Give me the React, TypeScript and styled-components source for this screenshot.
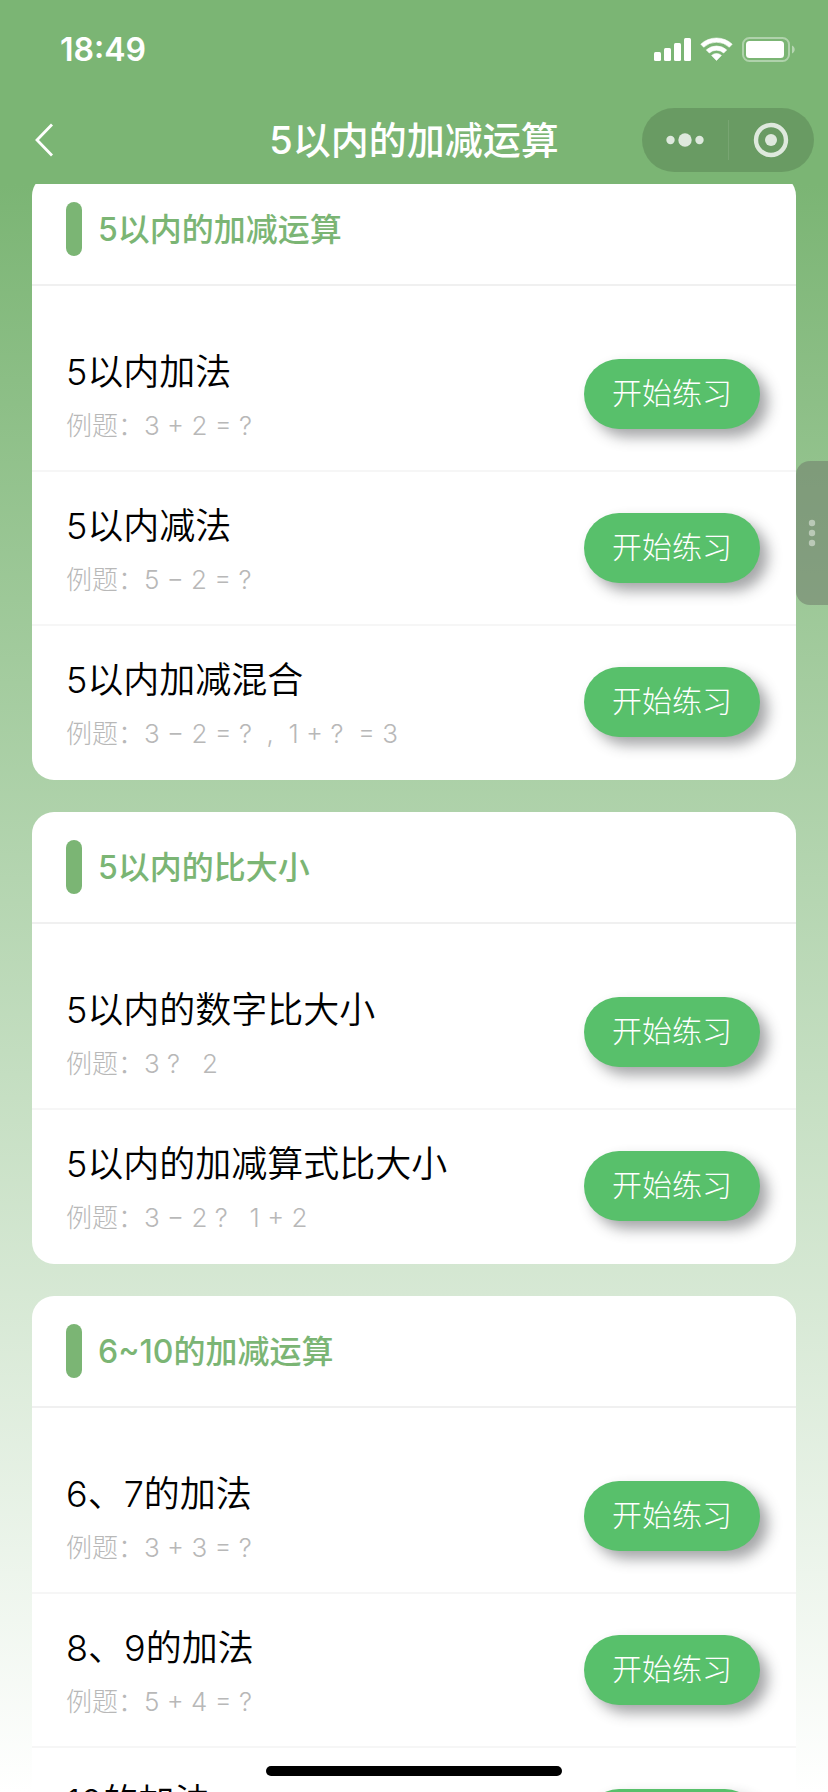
import React from "react";
import styled, { createGlobalStyle } from "styled-components";

const GlobalStyle = createGlobalStyle`
  * { box-sizing: border-box; }
  body {
    margin: 0;
    font-family: Inter, "Noto Sans CJK SC", sans-serif;
    color: #000;
  }
`;

const Screen = styled.div`
  display: flex;
  flex-direction: column;
  height: 100vh;
  overflow: hidden;
  background: #7bb574;
`;

const StatusBar = styled.div`
  display: flex;
  align-items: center;
  justify-content: space-between;
  flex: none;
  height: 96px;
  padding: 4px 32px 0 60px;
  color: #fff;
`;

const Clock = styled.time`
  font-size: 32px;
  line-height: 40px;
  font-weight: 600;
`;

const NavBar = styled.header`
  display: grid;
  grid-template-columns: 1fr auto 1fr;
  align-items: center;
  flex: none;
  height: 88px;
  padding: 0 14px;
  color: #fff;
`;

const BackButton = styled.button`
  display: flex;
  justify-self: start;
  padding: 8px 20px;
  border: 0;
  background: none;
  color: inherit;
`;

const PageTitle = styled.h1`
  margin: 0;
  font-size: 38px;
  line-height: 48px;
  font-weight: 500;
`;

const Capsule = styled.div`
  display: flex;
  align-items: center;
  justify-self: end;
  width: 172px;
  height: 64px;
  border-radius: 32px;
  background: rgba(0, 0, 0, 0.14);
`;

const CapsuleButton = styled.button`
  display: flex;
  align-items: center;
  justify-content: center;
  flex: 1;
  height: 100%;
  padding: 0;
  border: 0;
  background: none;
`;

const CapsuleDivider = styled.span`
  width: 1px;
  height: 40px;
  background: rgba(255, 255, 255, 0.1);
`;

const Content = styled.main`
  flex: 1;
  min-height: 0;
  overflow-y: auto;
  scrollbar-width: none;
  background: linear-gradient(#7bb574, #fff);
`;

const SectionList = styled.div`
  display: flex;
  flex-direction: column;
  gap: 32px;
  margin-top: -10px;
  padding: 0 32px 32px;
`;

const Card = styled.section`
  border-radius: 22px;
  background: #fff;
`;

const CardHeader = styled.div`
  display: flex;
  align-items: center;
  gap: 16px;
  height: 112px;
  padding: 0 34px;
  border-bottom: 2px solid #f0f0f0;
`;

const Marker = styled.span`
  width: 16px;
  height: 54px;
  border-radius: 8px;
  background: #7bb574;
`;

const CardTitle = styled.h2`
  margin: 0;
  padding-top: 2px;
  font-size: 32px;
  line-height: 44px;
  font-weight: 500;
  color: #7bb574;
`;

const ExerciseList = styled.ul`
  margin: 0;
  padding: 32px 0 0;
  list-style: none;
`;

const ExerciseRow = styled.li`
  display: flex;
  align-items: center;
  justify-content: space-between;
  height: 154px;
  padding: 0 36px 0 34px;
  border-bottom: 2px solid #f6f6f6;

  &:last-child {
    border-bottom-color: transparent;
  }
`;

const ExerciseText = styled.div`
  padding-top: 4px;
`;

const ExerciseName = styled.h3`
  margin: 0;
  font-size: 36px;
  line-height: 60px;
  font-weight: 350;
`;

const Example = styled.p`
  margin: 0;
  font-size: 26px;
  line-height: 48px;
  font-weight: 300;
  color: #b8b8b8;
  white-space: pre;
`;

const StartButton = styled.button`
  width: 176px;
  height: 70px;
  padding: 0 0 2px;
  border: 0;
  border-radius: 35px;
  background: #58c06b;
  box-shadow: 8px 8px 14px rgba(50, 52, 58, 0.44);
  color: #fff;
  font-family: inherit;
  font-size: 30px;
  line-height: 40px;
  font-weight: 300;
`;

const SideTab = styled.button`
  position: fixed;
  top: 461px;
  right: 0;
  display: flex;
  align-items: center;
  justify-content: center;
  width: 32px;
  height: 144px;
  padding: 0;
  border: 0;
  border-radius: 14px 0 0 14px;
  background: rgba(112, 124, 108, 0.55);
`;

const HomeIndicator = styled.div`
  position: fixed;
  bottom: 16px;
  left: 50%;
  width: 296px;
  height: 10px;
  border-radius: 5px;
  background: #000;
  transform: translateX(-50%);
`;

const StatusIcons = () => (
  <svg width="142" height="26" viewBox="0 0 142 26" fill="#fff" aria-hidden="true">
    <rect x="0" y="15" width="7" height="9" rx="1.5" />
    <rect x="10" y="11" width="7" height="13" rx="1.5" />
    <rect x="20" y="6" width="7" height="18" rx="1.5" />
    <rect x="30" y="1" width="7" height="23" rx="1.5" />
    <path d="M46.8 7.2a23 23 0 0 1 31.4 0l-2.9 3a18.8 18.8 0 0 0-25.6 0z" stroke="#fff" strokeWidth="0.6" strokeLinejoin="round" />
    <path d="M52.3 12.9a15.2 15.2 0 0 1 20.4 0l-3 3.1a10.8 10.8 0 0 0-14.4 0z" stroke="#fff" strokeWidth="0.6" strokeLinejoin="round" />
    <path d="M57.6 18.4a7.4 7.4 0 0 1 9.8 0l-4.9 5.1z" stroke="#fff" strokeWidth="0.6" strokeLinejoin="round" />
    <rect x="89" y="1" width="46" height="23" rx="6.5" fill="none" stroke="#fff" strokeOpacity="0.4" strokeWidth="2" />
    <rect x="92" y="4" width="38" height="17" rx="3.5" />
    <path d="M138 8.5c3.6 1.4 3.6 6.600 0 8z" fillOpacity="0.45" />
  </svg>
);

type Exercise = { name: string; example: string };
type Section = { title: string; exercises: Exercise[] };

const sections: Section[] = [
  {
    title: "5以内的加减运算",
    exercises: [
      { name: "5以内加法", example: "3 + 2 = ?" },
      { name: "5以内减法", example: "5 − 2 = ?" },
      { name: "5以内加减混合", example: "3 − 2 = ?  ,  1 + ?  = 3" },
    ],
  },
  {
    title: "5以内的比大小",
    exercises: [
      { name: "5以内的数字比大小", example: "3 ?   2" },
      { name: "5以内的加减算式比大小", example: "3 − 2 ?   1 + 2" },
    ],
  },
  {
    title: "6~10的加减运算",
    exercises: [
      { name: "6、7的加法", example: "3 + 3 = ?" },
      { name: "8、9的加法", example: "5 + 4 = ?" },
      { name: "10的加法", example: "5 + 5 = ?" },
    ],
  },
];

export default function App() {
  return (
    <Screen>
      <GlobalStyle />
      <StatusBar>
        <Clock>18:49</Clock>
        <StatusIcons />
      </StatusBar>
      <NavBar>
        <BackButton type="button" aria-label="返回">
          <svg width="22" height="36" viewBox="0 0 22 36" fill="none" stroke="#fff" strokeWidth="2.800">
            <path d="M18 2.500L3 18l15 15.500" />
          </svg>
        </BackButton>
        <PageTitle>5以内的加减运算</PageTitle>
        <Capsule>
          <CapsuleButton type="button" aria-label="更多">
            <svg width="40" height="16" viewBox="0 0 40 16" fill="#fff" fillOpacity="0.78">
              <circle cx="5.500" cy="8" r="4.200" />
              <circle cx="20" cy="8" r="6.700" />
              <circle cx="34.500" cy="8" r="4.200" />
            </svg>
          </CapsuleButton>
          <CapsuleDivider />
          <CapsuleButton type="button" aria-label="关闭">
            <svg width="36" height="36" viewBox="0 0 36 36" fill="#fff" fillOpacity="0.78">
              <circle cx="18" cy="18" r="15" fill="none" stroke="#fff" strokeOpacity="0.78" strokeWidth="4.400" />
              <circle cx="18" cy="18" r="6" />
            </svg>
          </CapsuleButton>
        </Capsule>
      </NavBar>
      <Content>
        <SectionList>
          {sections.map((section) => (
            <Card key={section.title}>
              <CardHeader>
                <Marker />
                <CardTitle>{section.title}</CardTitle>
              </CardHeader>
              <ExerciseList>
                {section.exercises.map((exercise) => (
                  <ExerciseRow key={exercise.name}>
                    <ExerciseText>
                      <ExerciseName>{exercise.name}</ExerciseName>
                      <Example>例题：{exercise.example}</Example>
                    </ExerciseText>
                    <StartButton type="button">开始练习</StartButton>
                  </ExerciseRow>
                ))}
              </ExerciseList>
            </Card>
          ))}
        </SectionList>
      </Content>
      <SideTab type="button" aria-label="展开">
        <svg width="8" height="28" viewBox="0 0 8 28" fill="#fff" fillOpacity="0.45">
          <circle cx="4" cy="4" r="3.200" />
          <circle cx="4" cy="14" r="3.200" />
          <circle cx="4" cy="24" r="3.200" />
        </svg>
      </SideTab>
      <HomeIndicator />
    </Screen>
  );
}
